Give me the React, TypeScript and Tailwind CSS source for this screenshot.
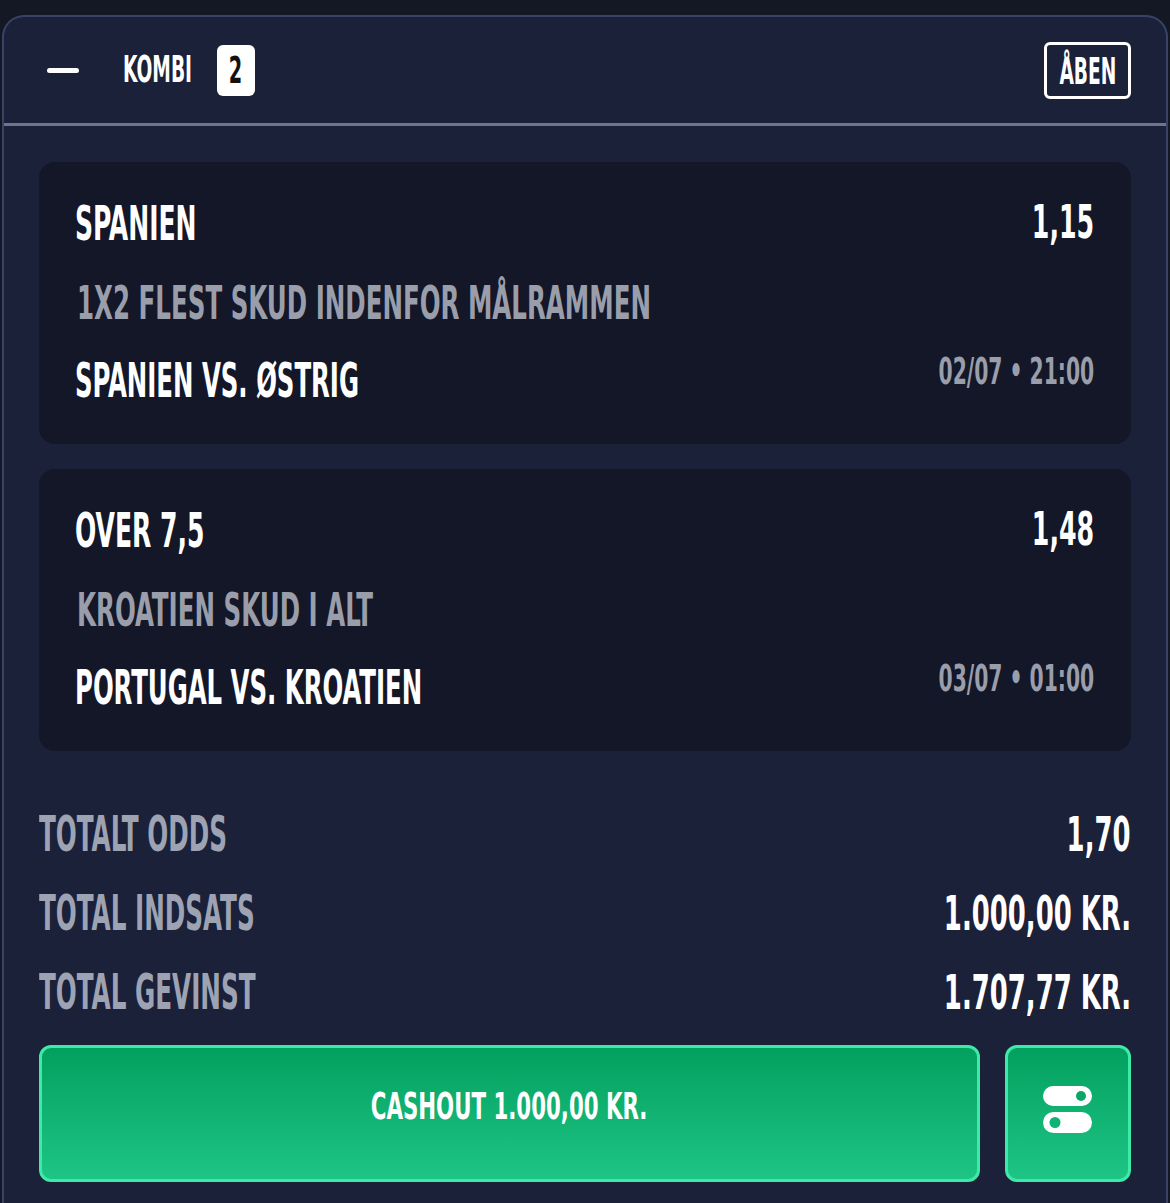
import React from "react";

const FONT = "font-['Liberation_Sans_Narrow','DejaVu_Sans_Condensed',sans-serif] font-bold";

function S({
  children,
  className = "",
  sc = "scale-x-[0.58]",
}: {
  children: React.ReactNode;
  className?: string;
  sc?: string;
}) {
  return (
    <span className={`inline-block whitespace-nowrap leading-none ${sc} ${className}`}>
      {children}
    </span>
  );
}

function Bet({
  sel,
  odds,
  market,
  match,
  date,
}: {
  sel: string;
  odds: string;
  market: string;
  match: string;
  date: string;
}) {
  return (
    <div className="rounded-[16px] bg-[#131728] pl-[36px] pr-[37px] pt-[37px] pb-[40px]">
      <div className="flex items-start justify-between">
        <S className="origin-left text-[48px] text-white">{sel}</S>
        <S sc="scale-x-[0.61]" className="origin-right text-[46px] text-white">{odds}</S>
      </div>
      <div className="mt-[32px] flex">
        <S className="origin-left text-[47px] text-[#9a9eab] ml-[2px]">{market}</S>
      </div>
      <div className="mt-[30px] flex items-start justify-between">
        <S sc="scale-x-[0.565]" className="origin-left text-[48px] text-white">{match}</S>
        <S sc="scale-x-[0.61]" className="origin-right -mt-[3px] text-[37px] text-[#9a9eab]">{date}</S>
      </div>
    </div>
  );
}

function TotalRow({ label, value }: { label: string; value: string }) {
  return (
    <div className="flex items-start justify-between">
      <S sc="scale-x-[0.56]" className="origin-left text-[49px] text-[#9ea3b3]">{label}</S>
      <S sc="scale-x-[0.6]" className="origin-right text-[48px] text-white">{value}</S>
    </div>
  );
}

export default function App() {
  return (
    <div className={`h-[1203px] w-full overflow-hidden bg-[#141825] pt-[15px] ${FONT}`}>
      <div className="mx-[2px] h-[1200px] rounded-t-[22px] border-2 border-b-0 border-[#384366] bg-[#1b2139]">
        {/* header */}
        <div className="flex h-[106px] items-center pl-[43px] pr-[35px]">
          <div className="h-[5px] w-[32px] rounded-full bg-white" />
          <div className="ml-[44px] w-[68px]">
            <S sc="scale-x-[0.56]" className="origin-left text-[37px] text-white">KOMBI</S>
          </div>
          <div className="ml-[26px] flex h-[51px] w-[38px] items-center justify-center rounded-[6px] bg-white">
            <S className="origin-center text-[37px] text-[#111]">2</S>
          </div>
          <div className="ml-auto flex h-[57px] w-[87px] items-center justify-center rounded-[6px] border-[3px] border-white">
            <S sc="scale-x-[0.56]" className="origin-center mt-[3px] text-[37px] text-white">ÅBEN</S>
          </div>
        </div>
        <div className="h-[3px] w-full bg-[#6c7490]" />

        <div className="px-[35px] pt-[36px]">
          <div className="flex flex-col gap-[25px]">
            <Bet
              sel="SPANIEN"
              odds="1,15"
              market="1X2 FLEST SKUD INDENFOR MÅLRAMMEN"
              match="SPANIEN VS. ØSTRIG"
              date="02/07 • 21:00"
            />
            <Bet
              sel="OVER 7,5"
              odds="1,48"
              market="KROATIEN SKUD I ALT"
              match="PORTUGAL VS. KROATIEN"
              date="03/07 • 01:00"
            />
          </div>

          <div className="mt-[59px] flex flex-col gap-[30px]">
            <TotalRow label="TOTALT ODDS" value="1,70" />
            <TotalRow label="TOTAL INDSATS" value="1.000,00 KR." />
            <TotalRow label="TOTAL GEVINST" value="1.707,77 KR." />
          </div>

          <div className="mt-[28px] flex gap-[25px]">
            <button className="flex h-[137px] flex-1 items-center justify-center rounded-[12px] border-[3px] border-[#3feaa9] bg-gradient-to-b from-[#02a05f] to-[#1dc585] pb-[14px]">
              <S sc="scale-x-[0.64]" className="origin-center text-[37px] text-white">CASHOUT 1.000,00 KR.</S>
            </button>
            <button className="flex h-[137px] w-[126px] items-center justify-center rounded-[12px] border-[3px] border-[#3feaa9] bg-gradient-to-b from-[#02a05f] to-[#1dc585] pb-[8px]">
              <svg width="50" height="48" viewBox="0 0 50 48">
                <rect x="0" y="0" width="49" height="20" rx="10" fill="#fff" />
                <circle cx="38" cy="10" r="5" fill="#0aa868" />
                <rect x="0" y="26" width="49" height="21" rx="10.5" fill="#fff" />
                <circle cx="12" cy="36.5" r="5.5" fill="#10b373" />
              </svg>
            </button>
          </div>
        </div>
      </div>
    </div>
  );
}
